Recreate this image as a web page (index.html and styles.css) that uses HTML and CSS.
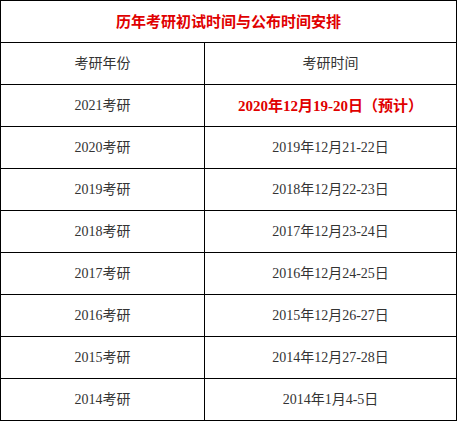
FILE: index.html
```html
<!DOCTYPE html>
<html lang="zh">
<head>
<meta charset="utf-8">
<link rel="stylesheet" href="styles.css">
</head>
<body>
<table class="schedule">
  <colgroup><col class="col-year"><col class="col-date"></colgroup>
  <tr><td class="title" colspan="2">历年考研初试时间与公布时间安排</td></tr>
  <tr><td>考研年份</td><td>考研时间</td></tr>
  <tr><td>2021考研</td><td class="hot">2020年12月19-20日（预计）</td></tr>
  <tr><td>2020考研</td><td>2019年12月21-22日</td></tr>
  <tr><td>2019考研</td><td>2018年12月22-23日</td></tr>
  <tr><td>2018考研</td><td>2017年12月23-24日</td></tr>
  <tr><td>2017考研</td><td>2016年12月24-25日</td></tr>
  <tr><td>2016考研</td><td>2015年12月26-27日</td></tr>
  <tr><td>2015考研</td><td>2014年12月27-28日</td></tr>
  <tr><td>2014考研</td><td>2014年1月4-5日</td></tr>
</table>
</body>
</html>
```
FILE: styles.css
```css
html, body {
  margin: 0;
  padding: 0;
  background: #fff;
}
.schedule {
  border-collapse: collapse;
  width: 456px;
  table-layout: fixed;
  font-family: "Liberation Serif", "Noto Sans CJK SC", serif;
  font-size: 14px;
  color: #333;
}
.col-year {
  width: 204px;
}
.col-date {
  width: 252px;
}
.schedule td {
  border: 1px solid #000;
  height: 41px;
  padding: 0;
  text-align: center;
  vertical-align: middle;
  line-height: 20px;
}
.schedule .title,
.schedule .hot {
  color: #e00000;
  font-weight: bold;
  font-size: 15px;
}
```
